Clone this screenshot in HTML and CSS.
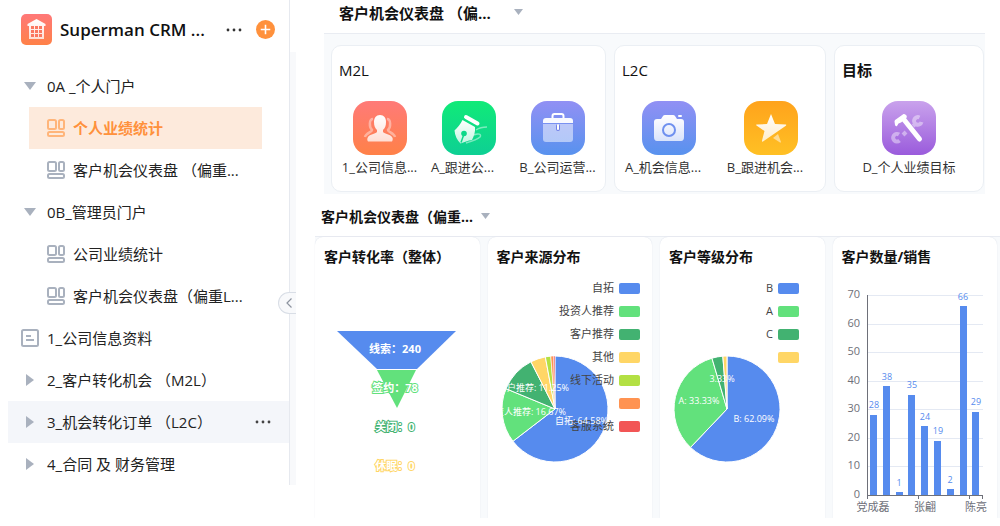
FILE: index.html
```html
<!DOCTYPE html>
<html lang="zh-CN">
<head>
<meta charset="utf-8">
<meta name="viewport" content="width=device-width, initial-scale=1">
<title>Superman CRM</title>
<link rel="stylesheet" href="styles.css">
</head>
<body>
<svg class="defs" width="0" height="0" aria-hidden="true">
  <defs>
    <linearGradient id="fade" x1="0" y1="0" x2="0" y2="1"><stop offset="0" stop-color="#fff"/><stop offset="1" stop-color="#fff" stop-opacity=".75"/></linearGradient>
    <symbol id="board" viewBox="0 0 18 18"><g fill="none" stroke="currentColor" stroke-width="2"><rect x="1" y="1" width="8" height="9" rx="1.500"/><rect x="12" y="1" width="5" height="9" rx="1.500"/><rect x="1" y="13" width="16" height="4" rx="1.500"/></g></symbol>
    <symbol id="dots" viewBox="0 0 16 4"><g fill="currentColor"><circle cx="2" cy="2" r="1.4"/><circle cx="8" cy="2" r="1.4"/><circle cx="14" cy="2" r="1.4"/></g></symbol>
    <symbol id="down" viewBox="0 0 12 8"><path d="M0 0h12L6 8z" fill="currentColor"/></symbol>
    <symbol id="right" viewBox="0 0 8 12"><path d="M0 0l8 6-8 6z" fill="currentColor"/></symbol>
  </defs>
</svg>
<div class="page">
  <aside class="sidebar">
    <div class="sidebar-main">
      <header class="brand">
        <svg class="brand-logo" viewBox="0 0 31 31" aria-hidden="true">
          <defs><linearGradient id="logo" x1="0" y1="0" x2="0" y2="1"><stop offset="0" stop-color="#ff7878"/><stop offset="1" stop-color="#ff8148"/></linearGradient></defs>
          <rect width="31" height="31" rx="5" fill="url(#logo)"/>
          <path d="M15.500 5l9 5v2h-1.500v13H8V12H6.500v-2z" fill="url(#fade)"/>
          <g fill="#fb7760"><path d="M10 12h3v3h-3zM14 12h3v3h-3zM18 12h3v3h-3zM10 16h3v3h-3zM14 16h3v3h-3zM18 16h3v3h-3zM10 20h3v3h-3zM14 20h3v3h-3zM18 20h3v3h-3z"/></g>
        </svg>
        <h1 class="brand-name">Superman CRM ...</h1>
        <button class="icon-btn" type="button" aria-label="更多"><svg width="16" height="4"><use href="#dots"/></svg></button>
        <button class="icon-btn add" type="button" aria-label="新建"><svg width="19" height="19" viewBox="0 0 18 18"><circle cx="9" cy="9" r="9" fill="#ff913c"/><path d="M9 4.500v9M4.500 9h9" stroke="#fff" stroke-width="1.500"/></svg></button>
      </header>
      <nav class="tree">
        <a class="node" href="#"><svg class="mark" width="12" height="8"><use href="#down"/></svg><span>0A _个人门户</span></a>
        <a class="node child active" href="#"><svg class="mark" width="18" height="18"><use href="#board"/></svg><span>个人业绩统计</span></a>
        <a class="node child" href="#"><svg class="mark" width="18" height="18"><use href="#board"/></svg><span>客户机会仪表盘 （偏重...</span></a>
        <a class="node" href="#"><svg class="mark" width="12" height="8"><use href="#down"/></svg><span>0B_管理员门户</span></a>
        <a class="node child" href="#"><svg class="mark" width="18" height="18"><use href="#board"/></svg><span>公司业绩统计</span></a>
        <a class="node child" href="#"><svg class="mark" width="18" height="18"><use href="#board"/></svg><span>客户机会仪表盘（偏重L...</span></a>
        <a class="node" href="#"><svg class="mark" width="18" height="18" viewBox="0 0 18 18"><g fill="none" stroke="currentColor" stroke-width="2"><rect x="1" y="1" width="16" height="16" rx="1.500"/><path d="M5 7h5M5 11h8"/></g></svg><span>1_公司信息资料</span></a>
        <a class="node" href="#"><svg class="mark" width="8" height="12"><use href="#right"/></svg><span>2_客户转化机会 （M2L）</span></a>
        <a class="node hover" href="#"><svg class="mark" width="8" height="12"><use href="#right"/></svg><span>3_机会转化订单 （L2C）</span><svg class="node-more" width="16" height="4"><use href="#dots"/></svg></a>
        <a class="node" href="#"><svg class="mark" width="8" height="12"><use href="#right"/></svg><span>4_合同 及 财务管理</span></a>
      </nav>
    </div>
    <div class="gutter"><button class="collapse" type="button" aria-label="收起"><svg width="6" height="10" viewBox="0 0 6 10"><path d="M5.500.5L1 5l4.500 4.500" fill="none" stroke="#8d94a0" stroke-width="1.200"/></svg></button></div>
  </aside>

  <main class="content">
    <section class="portal">
      <button class="switch portal-switch" type="button"><span>客户机会仪表盘 （偏...</span><svg width="9" height="6"><use href="#down"/></svg></button>
      <div class="groups">
        <article class="group">
          <h2 class="group-title latin">M2L</h2>
          <div class="apps">
            <a class="app" href="#">
              <svg class="tile coral" viewBox="0 0 54 54"><g fill="none" stroke="#fff" stroke-opacity=".4" stroke-width="2.500"><path d="M20 18c-4 0-4 8-1 11 0 2-6 3-7 7M34 18c4 0 4 8 1 11 0 2 6 3 7 7"/></g><path d="M27 14c4 0 6 3 6 7s-1 6-3 8v2c2 2 7 2 9 5 1 1 1 3 0 4.500H15c-1-1.500-1-3 0-4.500 2-3 7-3 9-5v-2c-2-2-3-4-3-8s2-7 6-7z" fill="url(#fade)"/></svg>
              <span class="app-label">1_公司信息...</span></a>
            <a class="app" href="#">
              <svg class="tile green" viewBox="0 0 54 54">
                <path d="M24 16l11.500 6.500" stroke="#fff" stroke-width="4" stroke-linecap="round"/>
                <path d="M20.500 19l12.500 7c.5 5-1 9-3 13-4 .5-8 2-11.500 3.500C15 39 13 35 12.500 29.500c3-3 6-6 8-10.500z" fill="url(#fade)"/>
                <circle cx="22" cy="32.500" r="2.800" fill="#0ed98a"/><path d="M22 33l-3 8.500" stroke="#0ed98a" stroke-width="1.500"/>
                <path d="M34 29c3-2 6-3 11-3M32 34c4-2 8-1 6 2-2 2-7 4-14 6" fill="none" stroke="#fff" stroke-opacity=".45" stroke-width="1.500"/>
              </svg>
              <span class="app-label cut">A_跟进公...</span></a>
            <a class="app" href="#">
              <svg class="tile indigo" viewBox="0 0 54 54"><path d="M21.500 17v-2c0-1 .5-2 2-2h7c1.500 0 2 1 2 2v2" fill="none" stroke="#fff" stroke-width="2"/><path d="M15 17h24q3 0 3 3v2H12v-2q0-3 3-3z" fill="#fff" fill-opacity=".95"/><path d="M12 23h30v15q0 3-3 3H15q-3 0-3-3z" fill="#fff" fill-opacity=".5"/><path d="M27 25v3" stroke="#6f7fe8" stroke-width="4" stroke-linecap="round"/><path d="M27 24v4" stroke="#fff" stroke-width="2" stroke-linecap="round"/></svg>
              <span class="app-label">B_公司运营...</span></a>
          </div>
        </article>
        <article class="group">
          <h2 class="group-title latin">L2C</h2>
          <div class="apps">
            <a class="app" href="#">
              <svg class="tile indigo" viewBox="0 0 54 54"><path d="M15 18h4l2-3q.5-1 2-1h8q1.500 0 2 1l2 3h4q3 0 3 3v15q0 4-3 4H15q-3 0-3-4V21q0-3 3-3z" fill="url(#fade)"/><rect x="36" y="14" width="4" height="2" rx="1" fill="#fff"/><circle cx="27" cy="29" r="6" fill="none" stroke="#6f90ef" stroke-width="2"/></svg>
              <span class="app-label cut">A_机会信息...</span></a>
            <a class="app" href="#">
              <svg class="tile amber" viewBox="0 0 54 54"><path d="M27 13l4 10 11 .5c.5.500.300 1-.5 1.500L19 40.500c-.8.500-1.200 0-1-1L20.500 30l-8-5.500c-.6-.6-.4-1 .5-1L23 23z" fill="url(#fade)"/><path d="M29 37l5-4 3 8c0 .5-.5.800-1 .5z" fill="#fff" fill-opacity=".5"/></svg>
              <span class="app-label cut">B_跟进机会...</span></a>
          </div>
        </article>
        <article class="group">
          <h2 class="group-title">目标</h2>
          <div class="apps">
            <a class="app" href="#">
              <svg class="tile violet" viewBox="0 0 54 54">
                <g fill="none" stroke="#fff" stroke-opacity=".42" stroke-width="4"><path d="M37.500 16.500a3.800 3.800 0 1 0 2 4.500M31 25l3-2.500M17.500 39.500a3.800 3.800 0 1 1-.5-6M21 34l3-3"/></g>
                <path d="M21.500 18L37.500 38" stroke="#fff" stroke-width="5" stroke-linecap="round"/>
                <path d="M12.500 20.500c0-1 1-2 2-2.500l7-5q1.500-.5 3 1.500 1 1.500-.5 3l-5 4-2.500 1-1.500 2.500q-1 1-2-1z" fill="#fff"/>
              </svg>
              <span class="app-label">D_个人业绩目标</span></a>
          </div>
        </article>
      </div>
    </section>

    <section class="dashboard">
      <button class="switch board-switch" type="button"><span>客户机会仪表盘（偏重...</span><svg width="9" height="6"><use href="#down"/></svg></button>
      <div class="cards">
        <article class="card">
          <h3 class="card-title">客户转化率（整体）</h3>
          <svg class="chart" viewBox="0 0 164 246" role="img" aria-label="客户转化率">
            <path d="M22 59h119l-39 38H62z" fill="#568bee"/>
            <path d="M62 98h39l-19 38z" fill="#62e17c"/>
            <g class="funnel-label">
              <text x="80" y="81" stroke="#568bee">线索：240</text>
              <text x="80" y="120" stroke="#62e17c">签约：78</text>
              <text x="80" y="159" stroke="#42b271">关闭：0</text>
              <text x="80" y="198" stroke="#ffd666">休眠：0</text>
            </g>
          </svg>
        </article>
        <article class="card">
          <h3 class="card-title">客户来源分布</h3>
          <svg class="chart" viewBox="0 0 164 246" role="img" aria-label="客户来源分布">
            <defs><clipPath id="pie-area"><circle cx="67" cy="137" r="53"/></clipPath></defs>
            <g stroke="#fff" stroke-linejoin="round">
              <path d="M67 137V84A53 53 0 1 1 24.950 169.270z" fill="#568bee"/>
              <path d="M67 137L24.950 169.270A53 53 0 0 1 18.030 116.720z" fill="#62e17c"/>
              <path d="M67 137L18.030 116.720A53 53 0 0 1 42.940 89.780z" fill="#42b271"/>
              <path d="M67 137L42.940 89.780A53 53 0 0 1 57.340 84.890z" fill="#ffd666"/>
              <path d="M67 137L57.340 84.890A53 53 0 0 1 62.840 84.160z" fill="#b3e043"/>
              <path d="M67 137L62.840 84.160A53 53 0 0 1 65.610 84.020z" fill="#ff9351" stroke-width=".5"/>
              <path d="M67 137L65.610 84.020A53 53 0 0 1 67 84z" fill="#f25555" stroke-width=".5"/>
            </g>
            <g class="legend">
              <text x="126" y="20">自拓</text><text x="126" y="43">投资人推荐</text><text x="126" y="66">客户推荐</text><text x="126" y="89">其他</text><text x="126" y="112">线下活动</text><text x="126" y="158">客服系统</text>
              <rect x="131" y="11" width="21" height="11" rx="2" fill="#568bee"/><rect x="131" y="34" width="21" height="11" rx="2" fill="#62e17c"/><rect x="131" y="57" width="21" height="11" rx="2" fill="#42b271"/><rect x="131" y="80" width="21" height="11" rx="2" fill="#ffd666"/><rect x="131" y="103" width="21" height="11" rx="2" fill="#b3e043"/><rect x="131" y="126" width="21" height="11" rx="2" fill="#ff9351"/><rect x="131" y="149" width="21" height="11" rx="2" fill="#f25555"/>
            </g>
            <g class="pie-label end" clip-path="url(#pie-area)">
              <text x="81" y="119">客户推荐: 11.25%</text>
              <text x="78" y="143">投资人推荐: 16.67%</text>
              <text x="120" y="152">自拓: 64.58%</text>
            </g>
          </svg>
        </article>
        <article class="card">
          <h3 class="card-title">客户等级分布</h3>
          <svg class="chart" viewBox="0 0 164 246" role="img" aria-label="客户等级分布">
            <g stroke="#fff" stroke-linejoin="round">
              <path d="M67 137V84A53 53 0 1 1 30.500 175.400z" fill="#568bee"/>
              <path d="M67 137L30.500 175.400A53 53 0 0 1 51.950 86.180z" fill="#62e17c"/>
              <path d="M67 137L51.950 86.180A53 53 0 0 1 62.840 84.160z" fill="#42b271"/>
              <path d="M67 137L62.840 84.160A53 53 0 0 1 67 84z" fill="#ffd666"/>
            </g>
            <g class="legend">
              <text x="113" y="20">B</text><text x="113" y="43">A</text><text x="113" y="66">C</text>
              <rect x="118" y="11" width="21" height="11" rx="2" fill="#568bee"/><rect x="118" y="34" width="21" height="11" rx="2" fill="#62e17c"/><rect x="118" y="57" width="21" height="11" rx="2" fill="#42b271"/><rect x="118" y="80" width="21" height="11" rx="2" fill="#ffd666"/>
            </g>
            <g class="pie-label">
              <text x="62" y="110">3.33%</text><text x="39" y="132">A: 33.33%</text><text x="94" y="150">B: 62.09%</text>
            </g>
          </svg>
        </article>
        <article class="card">
          <h3 class="card-title">客户数量/销售</h3>
          <svg class="chart" viewBox="0 0 164 246" role="img" aria-label="客户数量/销售">
            <path d="M34 23.500h116M34 52.500h116M34 80.500h116M34 109.500h116M34 137.500h116M34 166.500h116M34 194.500h116" stroke="#e4e9f3"/>
            <g fill="#568bee"><rect x="37" y="143" width="7" height="80"/><rect x="50" y="114" width="7" height="109"/><rect x="63" y="220" width="7" height="3"/><rect x="75" y="123" width="7" height="100"/><rect x="88" y="154" width="7" height="69"/><rect x="101" y="169" width="7" height="54"/><rect x="114" y="217" width="7" height="6"/><rect x="127" y="34" width="7" height="189"/><rect x="139" y="140" width="7" height="83"/></g>
            <path d="M34.500 23v204M34 223.500h116M85.500 223v4M136.500 223v4M149.500 223v4" fill="none" stroke="#6e7079"/>
            <g class="y-axis"><text x="27" y="26">70</text><text x="27" y="55">60</text><text x="27" y="83">50</text><text x="27" y="112">40</text><text x="27" y="140">30</text><text x="27" y="169">20</text><text x="27" y="197">10</text><text x="27" y="226">0</text></g>
            <g class="x-axis"><text x="40" y="239">党成磊</text><text x="92" y="239">张翩</text><text x="143" y="239">陈亮</text></g>
            <g class="bar-label"><text x="41" y="136">28</text><text x="54" y="108">38</text><text x="66" y="214">1</text><text x="79" y="116">35</text><text x="92" y="148">24</text><text x="105" y="162">19</text><text x="117" y="211">2</text><text x="130" y="28">66</text><text x="143" y="133">29</text></g>
          </svg>
        </article>
      </div>
    </section>
  </main>
</div>
</body>
</html>
```
FILE: styles.css
```css
* { box-sizing: border-box; }

body {
  margin: 0;
  background: #fff;
  color: #222;
  font-family: "Open Sans", "Noto Sans CJK SC", sans-serif;
  font-size: 15px;
}

a { color: inherit; text-decoration: none; }
button { padding: 0; border: 0; background: none; color: inherit; font: inherit; cursor: pointer; }
h1, h2, h3 { margin: 0; }
svg { display: block; flex: none; }
.defs { position: absolute; }

.page { display: flex; align-items: flex-start; }

/* Sidebar */
.sidebar { display: flex; flex: none; width: 296px; }
.sidebar-main { flex: 1; padding-left: 8px; }
.brand { display: flex; align-items: center; height: 65px; padding: 0 14px 6px 13px; }
.brand-logo { width: 31px; height: 31px; }
.brand-name { flex: 1; margin-left: 8px; font-size: 17px; font-weight: 600; white-space: nowrap; color: #111; }
.icon-btn { display: flex; color: #333; }
.add { margin-left: 14px; }

.node {
  display: grid;
  grid-template-columns: 18px 1fr auto;
  column-gap: 8px;
  align-items: center;
  height: 42px;
  padding: 0 18px 0 13px;
  line-height: 20px;
  white-space: nowrap;
}
.mark { margin: 0 auto; color: #a9b1be; }
.child { margin: 0 27px 0 21px; padding: 0 0 0 18px; }
.active { background: #fdeadc; color: #ff913c; font-weight: 700; }
.active .mark { color: #ffb57a; }
.hover { background: #f4f6fa; }
.node-more { color: #444; }

.gutter {
  display: flex;
  align-items: flex-start;
  width: 7px;
  border-left: 1px solid #e6e9ef;
  background: linear-gradient(#fff 52px, #f8f9fb 52px);
}
.collapse {
  display: flex;
  flex: none;
  align-items: center;
  justify-content: center;
  width: 18px;
  height: 22px;
  margin: 292px 0 0 -12px;
  padding-left: 3px;
  border: 1px solid #d9dee6;
  border-right: 0;
  border-radius: 11px 0 0 11px;
  background: #f8f9fb;
}

/* Main area */
.content { flex: 1; min-width: 0; padding-left: 19px; }
.switch { display: flex; align-items: center; font-weight: 700; white-space: nowrap; color: #111; }
.switch svg { color: #a9b1be; }

.portal { margin: 0 15px 0 9px; }
.portal-switch { gap: 23px; height: 33px; padding: 0 0 9px 15px; }
.groups {
  display: grid;
  grid-template-columns: 275fr 212fr 150fr;
  gap: 8px;
  padding: 11px 1px 2px 7px;
  border-top: 1px solid #e9ecf2;
  background: #f8fafc;
}
.group { min-width: 0; padding: 13px 3px 12px; border: 1px solid #ebeff4; border-radius: 10px; background: #fff; }
.group-title { padding-left: 4px; font-size: 15px; line-height: 22px; font-weight: 700; color: #111; }
.latin { font-weight: 400; }
.apps { display: grid; grid-auto-flow: column; grid-auto-columns: 1fr; margin-top: 20px; }
.app { display: flex; flex-direction: column; align-items: center; min-width: 0; }
.tile { width: 54px; height: 54px; border-radius: 16px; }
.coral { background: linear-gradient(#ff7a78, #ff8148); }
.green { background: linear-gradient(#10ea78, #0ecf94); }
.indigo { background: linear-gradient(#9190f4, #5892ee); }
.amber { background: linear-gradient(#ffa31c, #ffc024); }
.violet { background: linear-gradient(#c9a2ec, #9a5bdc); }
.app-label { font-size: 13px; line-height: 24px; white-space: nowrap; color: #333; }
.cut { padding-right: 12px; }

.board-switch { gap: 8px; height: 42px; padding: 2px 0 0 6px; font-size: 14px; }
.cards {
  display: grid;
  grid-template-columns: repeat(4, minmax(0, 1fr));
  gap: 8px;
  padding-right: 3px;
  border-top: 1px solid #e9ecf2;
  background: #f8fafc;
}
.card { border-radius: 8px 8px 0 0; background: #fff; box-shadow: 0 0 1px #cfd6e2; }
.card-title { padding: 9px 0 4px 9px; font-size: 14px; line-height: 22px; font-weight: 700; white-space: nowrap; color: #111; }
.chart { width: 164px; height: 246px; }

/* Chart text */
.funnel-label { font-size: 11px; font-weight: 700; fill: #fff; stroke-width: 2px; paint-order: stroke; text-anchor: middle; }
.legend { font-size: 11px; fill: #444; text-anchor: end; }
.pie-label { font-size: 9px; fill: #fff; text-anchor: middle; }
.end { text-anchor: end; }
.y-axis { font-size: 11px; fill: #6e7079; text-anchor: end; }
.x-axis { font-size: 11px; fill: #6e7079; text-anchor: middle; }
.bar-label { font-size: 9px; fill: #568bee; text-anchor: middle; }
```
